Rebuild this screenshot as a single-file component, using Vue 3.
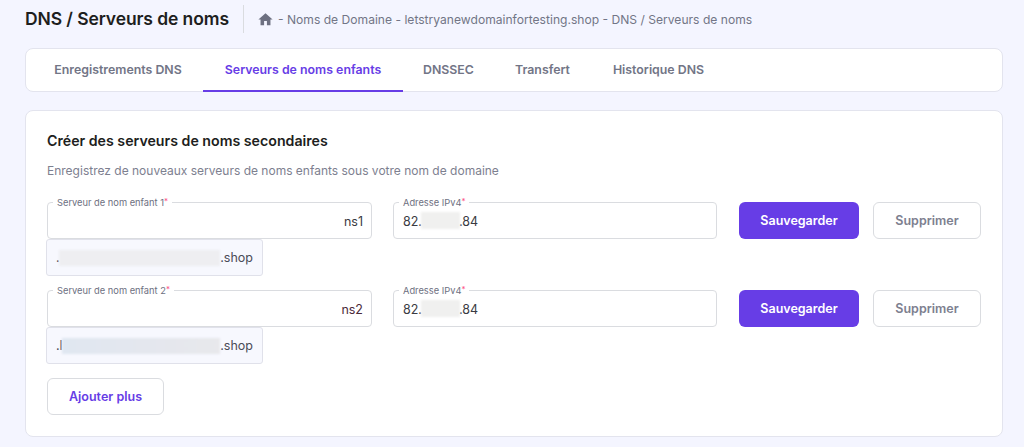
<script setup>
const tabs = [
  { label: 'Enregistrements DNS' },
  { label: 'Serveurs de noms enfants', active: true },
  { label: 'DNSSEC' },
  { label: 'Transfert' },
  { label: 'Historique DNS' },
]
const rows = [
  { label: 'Serveur de nom enfant 1', ns: 'ns1', lead: '.', blur: 165, nsClass: '', tone: '' },
  { label: 'Serveur de nom enfant 2', ns: 'ns2', lead: '.l', blur: 161, nsClass: 'wine', tone: 'cool' },
]
</script>

<template>
  <div class="page">
    <header class="head">
      <h1 class="title">DNS / Serveurs de noms</h1>
      <div class="crumbs">
        <svg class="home" viewBox="0 0 24 24" width="17" height="17"><path d="M10 20v-6h4v6h5v-8h3L12 3 2 12h3v8z" fill="#6d7081"/></svg>
        <span>- Noms de Domaine - letstryanewdomainfortesting.shop - DNS / Serveurs de noms</span>
      </div>
    </header>

    <nav class="tabs">
      <a v-for="t in tabs" :key="t.label" class="tab" :class="{ active: t.active }">{{ t.label }}</a>
    </nav>

    <section class="card">
      <h2 class="card-title">Créer des serveurs de noms secondaires</h2>
      <p class="card-sub">Enregistrez de nouveaux serveurs de noms enfants sous votre nom de domaine</p>

      <div v-for="r in rows" :key="r.ns" class="entry">
        <div class="row">
          <div class="field host">
            <label class="legend">{{ r.label }}<i>*</i></label>
            <span class="val right" :class="r.nsClass">{{ r.ns }}</span>
          </div>
          <div class="field ip">
            <label class="legend">Adresse IPv4<i>*</i></label>
            <span class="val">82.<b class="smudge ip-smudge"></b>.84</span>
          </div>
          <button class="btn primary">Sauvegarder</button>
          <button class="btn ghost">Supprimer</button>
        </div>
        <div class="suffix">
          <span>{{ r.lead }}</span><b class="smudge" :class="r.tone" :style="{ width: r.blur + 'px' }"></b><span>.shop</span>
        </div>
      </div>

      <button class="btn add">Ajouter plus</button>
    </section>
  </div>
</template>

<style scoped>
.page {
  width: 1024px;
  height: 447px;
  box-sizing: border-box;
  padding: 5px 21px 0 25px;
  background: #f4f5ff;
  font-family: Inter, "Liberation Sans", sans-serif;
  overflow: hidden;
}
.head {
  display: flex;
  align-items: center;
  height: 28px;
}
.title {
  margin: 0;
  width: 218px;
  height: 28px;
  line-height: 28px;
  font-size: 17.5px;
  font-weight: 600;
  color: #1d1e20;
  letter-spacing: -0.1px;
  white-space: nowrap;
  border-right: 1px solid #dadce0;
}
.crumbs {
  display: flex;
  align-items: center;
  gap: 4px;
  margin-left: 13px;
  font-size: 12.1px;
  color: #727586;
}
.home { flex: none; }
.tabs {
  display: flex;
  height: 44px;
  box-sizing: border-box;
  margin-top: 15px;
  padding-left: 7px;
  background: #fff;
  border: 1px solid #e3e4ee;
  border-radius: 8px;
}
.tab {
  display: flex;
  align-items: center;
  justify-content: center;
  height: 43px;
  box-sizing: border-box;
  padding-bottom: 1px;
  font-size: 12.35px;
  font-weight: 600;
  color: #727586;
  border-bottom: 2px solid transparent;
}
.tab:nth-child(1) { width: 170px; }
.tab:nth-child(2) { width: 200px; }
.tab:nth-child(3) { width: 91px; }
.tab:nth-child(4) { width: 97px; }
.tab:nth-child(5) { width: 135px; }
.tab.active {
  color: #673de6;
  border-bottom-color: #673de6;
}
.card {
  margin-top: 18px;
  height: 327px;
  box-sizing: border-box;
  padding: 21px 21px 0;
  background: #fff;
  border: 1px solid #e3e4ee;
  border-radius: 8px;
}
.card-title {
  margin: 0;
  font-size: 14.2px;
  line-height: 18px;
  font-weight: 600;
  color: #1d1e20;
}
.card-sub {
  margin: 12px 0 0;
  font-size: 12px;
  line-height: 18px;
  color: #7d808f;
}
.entry { height: 88px; }
.entry:first-of-type { margin-top: 22px; }
.row {
  display: flex;
  height: 37px;
}
.field {
  position: relative;
  box-sizing: border-box;
  height: 37px;
  border: 1px solid #dadce0;
  border-radius: 4px;
  font-size: 12.5px;
  color: #3a3b42;
  background: #fff;
}
.host { width: 325px; padding: 11px 8px 0; }
.ip { width: 324px; margin-left: 21px; padding: 9px 9px 0; }
.val { display: block; line-height: 15px; }
.right { text-align: right; }
.wine { color: #4a2a3a; }
.legend {
  position: absolute;
  top: -6px;
  left: 5px;
  padding: 0 4px;
  background: #fff;
  font-size: 9.3px;
  line-height: 11px;
  color: #6d7081;
}
.legend i {
  font-style: normal;
  color: #fc5185;
  font-size: 8px;
  vertical-align: 2px;
  line-height: 0;
}
.btn {
  box-sizing: border-box;
  height: 37px;
  border-radius: 6px;
  font-family: inherit;
  font-size: 12.5px;
  font-weight: 600;
  padding: 0;
}
.primary {
  width: 120px;
  margin-left: 22px;
  background: #673de6;
  border: 0;
  color: #fff;
}
.ghost {
  width: 108px;
  margin-left: 14px;
  background: #fff;
  border: 1px solid #dadce0;
  color: #7d808f;
}
.suffix {
  display: flex;
  align-items: center;
  width: 217px;
  height: 37px;
  box-sizing: border-box;
  margin-left: -1px;
  padding: 0 9px;
  background: #f7f8fe;
  border: 1px solid #e0e1ea;
  border-radius: 3px;
  font-size: 12.5px;
  color: #4a4b57;
}
.smudge {
  display: inline-block;
  height: 16px;
  margin-left: -1px;
  background: #eeeef1;
  filter: blur(1px);
}
.cool {
  background: linear-gradient(90deg, #e0e7f1, #e8e8ec);
}
.ip-smudge {
  width: 39px;
  height: 17px;
  vertical-align: -3px;
  background: #f0f0ef;
  margin-left: -1px;
  margin-right: -1px;
}
.add {
  display: block;
  width: 117px;
  background: #fff;
  border: 1px solid #dadce0;
  color: #673de6;
}
</style>
